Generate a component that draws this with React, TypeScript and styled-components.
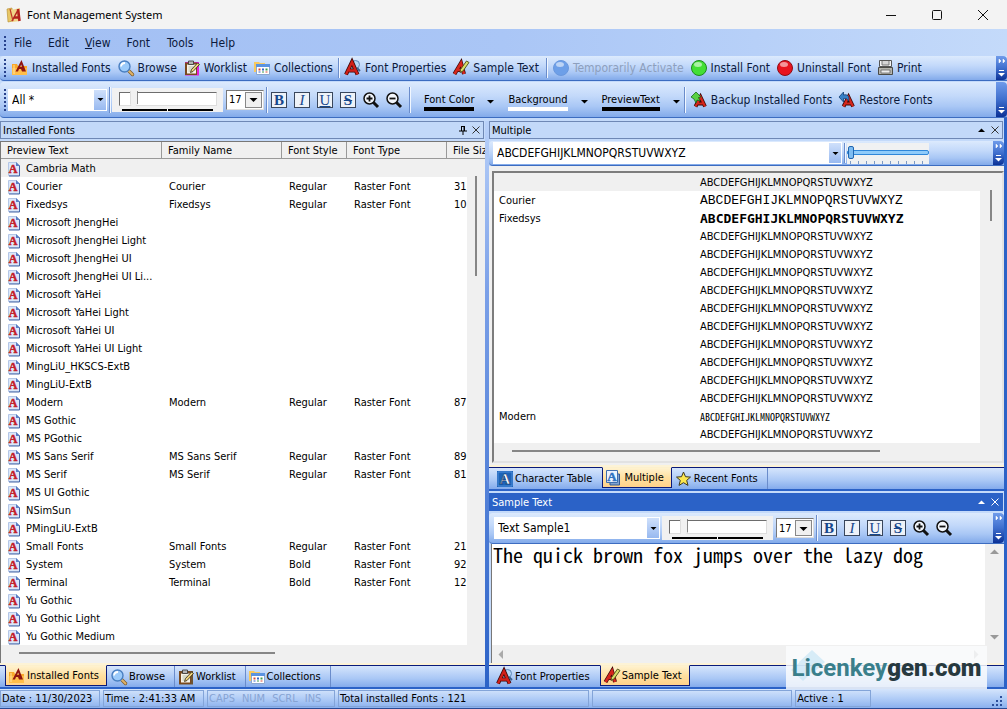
import React, { useState } from 'react';
import styled, { createGlobalStyle, css } from 'styled-components';

const ui = '"DejaVu Sans Condensed", "DejaVu Sans", sans-serif';
const bar = 'linear-gradient(#dceafd 0%, #c3d9fa 40%, #a9c7f5 70%, #82aaea 100%)';
const navy = '#0a1a7a';

const Global = createGlobalStyle`
  * { box-sizing: border-box; }
  body { margin: 0; background: #c4dafa; font-family: ${ui}; font-size: 11px; color: #000; }
  button, select, input, textarea { font: inherit; color: inherit; margin: 0; }
  button { background: none; border: 0; padding: 0; white-space: nowrap; }
  svg { display: block; flex: none; overflow: visible; }
`;

const Window = styled.div`
  position: relative;
  display: flex;
  flex-direction: column;
  min-height: 100vh;
  border-bottom: 2px solid #2a4a94;
`;
const TitleBar = styled.header`
  display: flex;
  align-items: center;
  height: 29px;
  padding-left: 6px;
  gap: 5px;
  background: #f3f3f3;
`;
const AppName = styled.h1`
  flex: 1;
  margin: 0;
  font: 400 11px/16px 'Noto Sans', sans-serif;
`;
const WinButtons = styled.div`
  display: flex;
  padding-right: 1px;
`;
const WinButton = styled.button`
  display: grid;
  place-items: center;
  width: 46px;
  height: 28px;
`;
const Menu = styled.nav`
  display: flex;
  align-items: center;
  gap: 1px;
  height: 27px;
  padding-left: 4px;
  font-size: 12px;
  color: #0c1a3c;
  background: linear-gradient(90deg, #a2bff3, #aac6f6 50%, #c4dafa);
`;
const MenuItem = styled.button`
  padding: 0 8px 0 7px;
  &:nth-of-type(n + 4) { padding-right: 9px; }
`;
const Grip = styled.span<{ $h?: number }>`
  width: 2px;
  height: ${(p) => p.$h || 14}px;
  background: repeating-linear-gradient(#27418c 0 2px, transparent 2px 4px);
`;
const ToolStrip = styled.div<{ $tall?: boolean }>`
  display: flex;
  align-items: center;
  height: ${(p) => (p.$tall ? 36 : 25)}px;
  margin-top: ${(p) => (p.$tall ? 1 : 0)}px;
  padding-left: 4px;
  font-size: 12px;
  border-bottom: 1px solid #3c6cc0;
  border-radius: 4px 0 0 4px;
  background: ${bar};
`;
const ToolButton = styled.button`
  display: flex;
  align-items: center;
  gap: 4px;
  height: 22px;
  padding: 0 3px 0 4px;
  color: #0c1a3c;
  &:disabled { color: #8d9fbd; }
`;
const Sep = styled.span<{ $h?: number }>`
  flex: none;
  width: 2px;
  height: ${(p) => p.$h || 20}px;
  margin: 0 1px 0 2px;
  border-left: 1px solid #6a8ccb;
  border-right: 1px solid #f1f7ff;
`;
const Overflow = styled.button`
  display: flex;
  flex-direction: column;
  align-items: center;
  justify-content: space-between;
  align-self: stretch;
  width: 11px;
  margin-left: auto;
  padding: 3px 0;
  border-radius: 0 4px 4px 0;
  background: linear-gradient(#6f9bea, #3f6fce 50%, #0b3196);
`;
const Edge = styled.span`
  width: 2px;
`;
const Combo = styled.span<{ $w?: number; $raised?: boolean }>`
  display: grid;
  grid-template-columns: minmax(0, 1fr) ${(p) => (p.$raised ? 17 : 12)}px;
  flex: ${(p) => (p.$w ? `0 0 ${p.$w}px` : '1 1 0')};
  height: ${(p) => (p.$raised ? 20 : 22)}px;
  background: #fff;
  border: 1px solid #fff;
  ${(p) =>
    p.$raised &&
    css`
      border-color: #777 #ddd #ddd #777;
      padding: 1px;
    `}
  select {
    grid-area: 1 / 1 / 2 / 3;
    width: 100%;
    min-width: 0;
    height: 100%;
    padding: 0 ${(p) => (p.$raised ? 1 : 3)}px;
    border: 0;
    border-radius: 0;
    background: transparent;
    appearance: none;
    font-size: ${(p) => (p.$raised ? 11 : 12)}px;
  }
`;
const Drop = styled.span<{ $raised?: boolean }>`
  grid-area: 1 / 2;
  display: grid;
  place-items: center;
  pointer-events: none;
  background: ${(p) => (p.$raised ? '#f0f0f0' : 'linear-gradient(#cfe0fb, #98b9f0)')};
  border: ${(p) => (p.$raised ? '1px solid #888' : '0')};
`;
const SliderBox = styled.label`
  display: flex;
  flex-direction: column;
  width: 111px;
  height: 24px;
  padding: 2px 7px 0;
  margin-right: 3px;
  background: #f1f1f1;
`;
const Slider = styled.input`
  width: 98px;
  height: 18px;
  background: transparent;
  appearance: none;
  &::-webkit-slider-runnable-track {
    height: 14px;
    border: 1px solid;
    border-color: #6d6d6d #ddd #ddd #6d6d6d;
    background: #fff;
  }
  &::-webkit-slider-thumb {
    appearance: none;
    width: 8px;
    height: 18px;
    margin-top: -2px;
    border-left: 1px solid #ddd;
    border-right: 1px solid #555;
    background: #f1f1f1;
    clip-path: polygon(0 0, 100% 0, 100% 72%, 50% 100%, 0 72%);
  }
`;
const TickLine = styled.span`
  height: 2px;
  margin: 1px 3px 0;
  background: linear-gradient(90deg, #000 0 49%, #fff 49% 51%, #000 51%);
`;
const SizeSliderBox = styled.label`
  width: 82px;
  height: 21px;
  padding: 3px 0 0;
  background: repeating-linear-gradient(90deg, transparent 0 3px, #7d9ac4 3px 4px, transparent 4px 8px) 0 18px / 100% 3px no-repeat #f0f1f2;
`;
const SizeSlider = styled.input`
  display: block;
  width: 82px;
  height: 14px;
  background: transparent;
  appearance: none;
  &::-webkit-slider-runnable-track {
    height: 5px;
    border: 1px solid #2f86d8;
    border-radius: 2px;
    background: #8fcbfa;
  }
  &::-webkit-slider-thumb {
    appearance: none;
    width: 6px;
    height: 13px;
    margin-top: -5px;
    border: 1px solid #2065b0;
    border-radius: 2px;
    background: #7dbcf2;
  }
`;
const FormatGroup = styled.div`
  display: flex;
  align-items: center;
  gap: 7px;
  padding: 0 5px 0 2px;
`;
const FormatButton = styled.button<{ $look: 'B' | 'I' | 'U' | 'S' }>`
  display: grid;
  place-items: center;
  width: 16px;
  height: 16px;
  border: 1px solid #39465c;
  background: #eef2f8;
  color: #17478c;
  font: 15px/14px 'Liberation Serif', serif;
  font-weight: ${(p) => (p.$look === 'B' || p.$look === 'S' ? 700 : 400)};
  font-style: ${(p) => (p.$look === 'I' ? 'italic' : 'normal')};
  text-decoration: ${(p) => (p.$look === 'U' ? 'underline' : p.$look === 'S' ? 'line-through' : 'none')};
`;
const ZoomButton = styled.button`
  width: 16px;
  height: 17px;
`;
const ColorPick = styled.button<{ $bar: string }>`
  display: flex;
  align-items: center;
  gap: 12px;
  padding: 3px 1px 0 12px;
  font-size: 11px;
  span {
    padding: 1px 0 0;
    border-bottom: 4px solid ${(p) => p.$bar};
    line-height: 14px;
  }
`;
const Workspace = styled.main`
  flex: 1;
  display: grid;
  grid-template-columns: minmax(0, 485fr) 4px minmax(0, 515fr);
  padding-top: 3px;
  border-right: 3px solid #2b62c7;
`;
const Splitter = styled.div`
  background: linear-gradient(#b9d1f9, #7ba0e8 30%, #2b62c7);
`;
const Column = styled.div`
  display: flex;
  flex-direction: column;
  min-width: 0;
`;
const Pane = styled.section<{ $grow?: boolean }>`
  display: flex;
  flex-direction: column;
  flex: ${(p) => (p.$grow ? 1 : 'none')};
  min-height: 0;
`;
const PaneTitle = styled.div<{ $active?: boolean }>`
  display: flex;
  align-items: center;
  gap: 5px;
  height: 18px;
  padding: 0 3px 0 2px;
  margin-right: 1px;
  margin-top: ${(p) => (p.$active ? 2 : 0)}px;
  border: 1px solid ${(p) => (p.$active ? '#2b62c7' : '#6f88b5')};
  background: ${(p) => (p.$active ? '#2b62c7' : '#c3d9f9')};
  color: ${(p) => (p.$active ? '#fff' : '#000')};
`;
const PaneName = styled.h2`
  flex: 1;
  margin: 0;
  font-size: 11px;
  font-weight: 400;
`;
const ListFrame = styled.div`
  position: relative;
  flex: 1;
  margin-top: 2px;
  padding-bottom: 18px;
  border-top: 1px solid #777;
  border-left: 1px solid #777;
  background: #f0f0f0;
`;
const FontTable = styled.table`
  width: 100%;
  table-layout: fixed;
  border-collapse: separate;
  border-spacing: 0;
  background: #fff;
  th, td {
    overflow: hidden;
    white-space: nowrap;
    text-align: left;
    font-weight: 400;
    line-height: 14px;
  }
  th {
    height: 17px;
    padding: 1px 0 0 6px;
    border-right: 1px solid #999;
    border-bottom: 1px solid #999;
    background: #f0f0f0;
  }
  th:last-child { border-right: 0; }
  td {
    height: 18px;
    padding: 1px 0 0 7px;
  }
  tbody tr:first-child td { background: #f0f0f0; }
`;
const NameCell = styled.span`
  display: flex;
  align-items: center;
  gap: 5px;
`;
const Col = styled.col<{ $w?: number }>`
  width: ${(p) => (p.$w ? p.$w + 'px' : 'auto')};
`;
const VScroll = styled.div<{ $top: number; $w: number; $bottom?: number }>`
  position: absolute;
  top: ${(p) => p.$top}px;
  right: 0;
  bottom: ${(p) => p.$bottom || 0}px;
  width: ${(p) => p.$w}px;
  display: flex;
  flex-direction: column;
  align-items: center;
  justify-content: space-between;
  background: #f0f0f0;
`;
const VThumb = styled.span<{ $h: number }>`
  width: 2px;
  height: ${(p) => p.$h}px;
  margin-top: 17px;
  background: #868686;
`;
const HScroll = styled.div`
  position: absolute;
  left: 0;
  right: 0;
  bottom: 0;
  height: 18px;
  padding: 7px 0 0 18px;
  background: #f0f0f0;
`;
const HThumb = styled.span<{ $w: number }>`
  display: block;
  width: ${(p) => p.$w}%;
  height: 2px;
  background: #868686;
`;
const Tabs = styled.div`
  display: flex;
  height: 24px;
  margin-top: 2px;
  padding: 0 0 1px 5px;
  border-top: 1px solid ${navy};
  border-bottom: 2px solid #2b62c7;
  background: linear-gradient(#d5e5fc, #a9c7f5 60%, #84abec);
  box-shadow: 0 -2px 0 #fdf3d6;
`;
const Tab = styled.button<{ $on?: boolean; $rule?: boolean }>`
  display: flex;
  align-items: center;
  align-self: flex-start;
  gap: 2px;
  height: 21px;
  padding: 0 9px 0 3px;
  border-right: 1px solid ${(p) => (p.$rule ? '#6a8ccb' : 'transparent')};
  ${(p) =>
    p.$on &&
    css`
      padding: 0 7px 0 3px;
      margin-right: 1px;
      margin-top: -1px;
      border: 1px solid ${navy};
      border-top-color: #fdf0cc;
      background: linear-gradient(#fff2cf, #ffe0a0 50%, #ffd28a);
    `}
`;
const InnerStrip = styled.div<{ $tall?: boolean }>`
  display: flex;
  align-items: center;
  height: ${(p) => (p.$tall ? 31 : 25)}px;
  margin-top: 2px;
  padding-left: ${(p) => (p.$tall ? 5 : 4)}px;
  border-bottom: 1px solid #3c6cc0;
  border-radius: 4px 0 0 4px;
  background: ${bar};
`;
const PreviewWrap = styled.div`
  padding: 5px 0 2px 3px;
  background: #f0f0f0;
`;
const PreviewFrame = styled.div`
  position: relative;
  padding: 0 22px 18px 0;
  border: 2px solid #7d7d7d;
  border-right-color: #e2e2e2;
  border-bottom-color: #e2e2e2;
  background: #f0f0f0;
`;
const PreviewTable = styled.table`
  width: 100%;
  table-layout: fixed;
  border-collapse: collapse;
  background: #fff;
  td {
    height: 18px;
    padding: 2px 0 0 5px;
    line-height: 14px;
    white-space: nowrap;
    overflow: hidden;
  }
  tr:first-child td { background: #f0f0f0; }
`;
const faces = {
  plain: css`letter-spacing: normal;`,
  courier: css`font: 13px/14px 'Liberation Mono', monospace;`,
  fixed: css`font: 700 13px/14px 'DejaVu Sans Mono', monospace;`,
  modern: css`font: 10px/14px 'Noto Sans Mono CJK SC', monospace;`,
};
const Specimen = styled.span<{ $face: keyof typeof faces }>`
  ${(p) => faces[p.$face]}
`;
const SampleFrame = styled.div`
  position: relative;
  flex: 1;
  display: flex;
  min-height: 114px;
  margin-left: 2px;
  padding: 0 19px 18px 0;
  border-left: 1px solid #777;
  background: #f0f0f0;
`;
const SampleBox = styled.textarea`
  flex: 1;
  padding: 0 1px;
  border: 0;
  outline: 0;
  resize: none;
  overflow: hidden;
  white-space: nowrap;
  background: #fff;
  font: 20px/22px 'Noto Sans Mono CJK SC', 'DejaVu Sans Mono', monospace;
`;
const HArrows = styled.div`
  position: absolute;
  left: 0;
  right: 19px;
  bottom: 0;
  height: 18px;
  display: flex;
  align-items: center;
  justify-content: space-between;
  padding: 0 5px;
`;
const Status = styled.footer`
  display: grid;
  grid-template-columns: 100px 101px 128px 251fr 201fr 76px 133fr;
  gap: 3px;
  height: 19px;
  padding: 1px 0;
  background: linear-gradient(#d5e5fc, #a9c7f5 60%, #8ab0ee);
`;
const StatusCell = styled.div<{ $dim?: boolean }>`
  display: flex;
  align-items: center;
  gap: 7px;
  padding-left: 1px;
  border: 1px solid #83a4d8;
  white-space: nowrap;
  overflow: hidden;
  color: ${(p) => (p.$dim ? '#86a3d3' : '#000')};
`;
const SizeGrip = styled.div`
  display: flex;
  justify-content: flex-end;
  align-items: flex-end;
  padding-right: 4px;
`;
const Watermark = styled.div`
  position: absolute;
  right: 20px;
  bottom: 19px;
  display: grid;
  place-items: center;
  width: 201px;
  height: 43px;
  background: rgba(250, 251, 253, 0.84);
  svg, p { grid-area: 1 / 1; }
  svg { justify-self: start; }
  p {
    margin: 0;
    font: 700 24px/40px Roboto, sans-serif;
    color: #3a7f8b;
  }
  b { color: #27393f; }
`;

/* ---------- icons ---------- */

const Letter = ({ x, y, s, c, o = '#4a0d0d' }: { x: number; y: number; s: number; c: string; o?: string }) => (
  <text x={x} y={y} fontSize={s} fontWeight="700" fontFamily="Liberation Serif, serif" fill={c} stroke={o} strokeWidth="0.5" textAnchor="middle">A</text>
);
const Svg = ({ children, w = 16, h = 16 }: { children: React.ReactNode; w?: number; h?: number }) => (
  <svg width={w} height={h} viewBox={`0 0 ${w} ${h}`} aria-hidden="true">{children}</svg>
);
const AppIcon = () => (
  <Svg>
    <path d="M1 2l5-1 1 13-5 1z" fill="#e8c766" stroke="#b38b2c" strokeWidth=".6" />
    <path d="M5 3l9-2v13l-8 1z" fill="#f0d488" />
    <path d="M6 14l6-11" stroke="#b3201d" strokeWidth="1.500" />
    <path d="M12 2l1.500 12M8 10.500h5" stroke="#b3201d" strokeWidth="2.600" fill="none" />
    <path d="M4 2l3 12" stroke="#c03a2a" strokeWidth="1.200" />
  </Svg>
);
const FolderIcon = () => (
  <Svg>
    <path d="M0 4h5l1 2h9v9H0z" fill="#f9a92c" />
    <path d="M0 8h15v7H0z" fill="#ffbe4a" />
    <path d="M2 5v9" stroke="#fde3a1" />
    <path d="M3.500 11.500L9.500 0l4.500 11.500h-4l-1-2.500H7l-1 2.500zM8 7h2L9.200 4.500z" fill="#8f1510" fillRule="evenodd" />
  </Svg>
);
const BrowseIcon = () => (
  <Svg>
    <path d="M10.500 10.500l4 4" stroke="#7c5a2a" strokeWidth="3.400" strokeLinecap="round" />
    <path d="M10.500 10.500l4 4" stroke="#e0b368" strokeWidth="2" strokeLinecap="round" />
    <circle cx="6.500" cy="6.500" r="5.500" fill="#9ccbfa" stroke="#4a7fc0" strokeWidth="1.400" />
    <path d="M3 6.500A4 4 0 017 3" stroke="#fff" strokeWidth="1.800" fill="none" />
  </Svg>
);
const WorkIcon = ({ tint = '#6e5331' }: { tint?: string }) => (
  <Svg>
    <path d="M1 2h14v13.500H1z" fill={tint} />
    <path d="M1 2.500h12v12.500H1z" fill="#7a4a1e" />
    <path d="M3 4.500h9v9H3z" fill="#f7f3e8" />
    <path d="M4.500 1h5v3.500h-5z" fill="#b5b5b5" stroke="#333" strokeWidth=".8" />
    <path d="M4.500 7h5M4.500 9h4M4.500 11h3" stroke="#b9c0a9" />
    <path d="M6.500 12.500l1-3L13.500 3l2 1.500-6.500 7z" fill="#efd27a" stroke="#2c2410" strokeWidth=".8" />
  </Svg>
);
const CollIcon = () => (
  <Svg>
    <path d="M0 2h5l1 1h5v9H0z" fill="#f8c95f" />
    <path d="M2.500 4.500h13v10h-13z" fill="#fff" stroke="#8ba6cf" />
    <path d="M2 4h14v3H2z" fill="#5b93e0" />
    <path d="M4.500 8.500h2v2h-2zM11.500 11.500h2v1h-2z" fill="#d94b3a" />
    <path d="M8 8.500h2v2H8zM4.500 11.500h2v1h-2z" fill="#3565c8" />
    <path d="M11.500 8.500h2v2h-2zM8 11.500h2v1H8z" fill="#3f9b52" />
  </Svg>
);
const PropsIcon = () => (
  <Svg>
    <circle cx="10.500" cy="4.500" r="4" fill="#b5d6f6" stroke="#5c87b8" />
    <path d="M1 14.500L7 2l5.500 12.500M4 10.500h6" stroke="#3a0808" strokeWidth="4" fill="none" />
    <path d="M1 14.500L7 2l5.500 12.500M4 10.500h6" stroke="#d21f19" strokeWidth="2.400" fill="none" />
    <path d="M12 8l3 3" stroke="#3b5f8c" strokeWidth="1.800" />
  </Svg>
);
const SampleIcon = () => (
  <Svg>
    <path d="M1.500 14L8 3l3 11M4 10h6" stroke="#3a0808" strokeWidth="4" fill="none" />
    <path d="M1.500 14L8 3l3 11M4 10h6" stroke="#d5261c" strokeWidth="2.600" fill="none" />
    <path d="M7.500 9.500L13.500 1 16 2.500l-6 8.500-3 1.500z" fill="#d8df6a" stroke="#4b4b14" strokeWidth=".9" />
  </Svg>
);
const BallIcon = ({ c, rim }: { c: string; rim: string }) => (
  <Svg>
    <circle cx="8" cy="8" r="7.500" fill={c} stroke={rim} />
    <ellipse cx="7" cy="4.500" rx="4" ry="2.500" fill="#fff" opacity=".55" />
  </Svg>
);
const PrintIcon = () => (
  <Svg w={15}>
    <path d="M1.500 .5h12v6h-12z" fill="#f4f4f4" stroke="#555" />
    <path d="M4 1v4h7V1" fill="#d5d5d5" stroke="#777" />
    <path d="M.5 7.500h14v7H.5z" fill="#b4b4ae" stroke="#4b4b46" />
    <path d="M3 10h9v3H3z" fill="#eee" stroke="#666" strokeWidth=".8" />
  </Svg>
);
const RedA = () => (
  <>
    <path d="M4.500 14.500L9.500 5l4.500 9.500M7 11.500h5" stroke="#3a0808" strokeWidth="3.800" fill="none" />
    <path d="M4.500 14.500L9.500 5l4.500 9.500M7 11.500h5" stroke="#d5261c" strokeWidth="2.200" fill="none" />
  </>
);
const BackupIcon = () => (
  <Svg>
    <RedA />
    <path d="M0 5l5-5 5 5-2.500.5L9 9 6 8l-1 3-2-4z" fill="#59d043" stroke="#156b1b" strokeWidth=".8" />
  </Svg>
);
const RestoreIcon = () => (
  <Svg>
    <RedA />
    <path d="M0 5l4.500-5v3c4-1 6.500 1.500 5 6-1-2-2.500-3-5-2.500V10z" fill="#3680c8" stroke="#123f75" strokeWidth=".8" />
  </Svg>
);
const DocIcon = () => (
  <Svg w={13} h={16}>
    <path d="M.5 1.500h8l3 3v10H.5z" fill="#dbe7f9" stroke="#b4c7e6" />
    <path d="M11.500 4.500v10.500H1" stroke="#4767a8" fill="none" />
    <path d="M8 1l4 4H8z" fill="#5c7fc4" />
    <Letter x={5} y={12} s={12} c="#c4202a" o="#c4202a" />
  </Svg>
);
const CharIcon = () => (
  <Svg>
    <path d="M0 0h16v16H0z" fill="#1c63b8" />
    <path d="M1 1h14v14H1z" fill="none" stroke="#4c8dda" />
    <Letter x={8} y={13} s={15} c="#fff" o="#0b2c5c" />
  </Svg>
);
const MultiIcon = () => (
  <Svg>
    <path d="M4 4h9.500v11H4z" fill="#7fa3d0" stroke="#345b94" />
    <path d="M.5 .5h11v12H.5z" fill="#eaf3fe" stroke="#3f6fae" />
    <Letter x={6} y={11} s={13} c="#2f74c0" o="#2f74c0" />
  </Svg>
);
const StarIcon = () => (
  <Svg>
    <path d="M7.500 1l2 4.700 5 .4-3.800 3.300 1.300 5L7.500 11.700 3 14.400l1.300-5L.5 6.100l5-.4z" fill="#fbe650" stroke="#3d3820" />
  </Svg>
);
const ZoomIcon = ({ plus }: { plus?: boolean }) => (
  <Svg>
    <circle cx="6.500" cy="6.500" r="5.500" fill="#f3f7fd" stroke="#111" strokeWidth="1.500" />
    <path d={plus ? 'M3.500 6.500h6M6.500 3.500v6' : 'M3.500 6.500h6'} stroke="#111" strokeWidth="1.800" />
    <path d="M10.500 10.500l4.500 4.500" stroke="#111" strokeWidth="3" />
  </Svg>
);
const Arrow = ({ w = 5, c = '#000', d = 'down' }: { w?: number; c?: string; d?: 'down' | 'up' | 'left' | 'right' }) => {
  const r = { down: 0, left: 90, up: 180, right: 270 }[d];
  return (
    <svg width="9" height="9" viewBox="0 0 9 9" aria-hidden="true">
      <path d={`M${4.5 - w / 2} 3h${w}L4.500 ${3 + w / 2}z`} fill={c} transform={`rotate(${r} 4.500 4.500)`} />
    </svg>
  );
};
const Cross = ({ c = '#333' }: { c?: string }) => (
  <Svg w={8} h={8}><path d="M.5 .5l7 7M7.500 .5l-7 7" stroke={c} /></Svg>
);
const Pin = () => (
  <Svg w={8} h={10}><path d="M2.500 1v5M2 1.500h4M5 1v5" stroke="#000" fill="none" /><path d="M5 1h1v5H5zM0 5.500h8v1H0zM3.500 6h1v4h-1z" /></Svg>
);

/* ---------- shared parts ---------- */

const More = ({ chevrons = true }: { chevrons?: boolean }) => (
  <Overflow aria-label="Toolbar options">
    {chevrons ? <Svg w={8} h={5}><path d="M1 0l2 2-2 2zM5 0l2 2-2 2z" fill="#fff" stroke="#fff" strokeWidth=".5" /></Svg> : <span />}
    <Svg w={7} h={7}><path d="M1 .5h5" stroke="#fff" /><path d="M0 3h7L3.500 6.500z" fill="#fff" /></Svg>
  </Overflow>
);

const Choice = ({ label, options, width, raised }: { label: string; options: string[]; width?: number; raised?: boolean }) => (
  <Combo $w={width} $raised={raised}>
    <select aria-label={label} defaultValue={options[0]}>
      {options.map((o) => <option key={o}>{o}</option>)}
    </select>
    <Drop $raised={raised}><Arrow w={raised ? 8 : 6} /></Drop>
  </Combo>
);

const SizeControls = () => (
  <>
    <SliderBox>
      <Slider type="range" aria-label="Font size" defaultValue={11} />
      <TickLine />
    </SliderBox>
    <Choice label="Point size" options={['17']} width={38} raised />
    <Sep $h={26} />
    <FormatGroup>
      <FormatButton $look="B" title="Bold">B</FormatButton>
      <FormatButton $look="I" title="Italic">I</FormatButton>
      <FormatButton $look="U" title="Underline">U</FormatButton>
      <FormatButton $look="S" title="Strikeout">S</FormatButton>
      <ZoomButton aria-label="Zoom in"><ZoomIcon plus /></ZoomButton>
      <ZoomButton aria-label="Zoom out"><ZoomIcon /></ZoomButton>
    </FormatGroup>
  </>
);

/* ---------- data ---------- */

type FontRow = [name: string, style?: string, size?: string];
const installed: FontRow[] = [
  ['Cambria Math'], ['Courier', 'Regular', '31'], ['Fixedsys', 'Regular', '10'],
  ['Microsoft JhengHei'], ['Microsoft JhengHei Light'], ['Microsoft JhengHei UI'], ['Microsoft JhengHei UI Li...'],
  ['Microsoft YaHei'], ['Microsoft YaHei Light'], ['Microsoft YaHei UI'], ['Microsoft YaHei UI Light'],
  ['MingLiU_HKSCS-ExtB'], ['MingLiU-ExtB'], ['Modern', 'Regular', '87'], ['MS Gothic'], ['MS PGothic'],
  ['MS Sans Serif', 'Regular', '89'], ['MS Serif', 'Regular', '81'], ['MS UI Gothic'], ['NSimSun'], ['PMingLiU-ExtB'],
  ['Small Fonts', 'Regular', '21'], ['System', 'Bold', '92'], ['Terminal', 'Bold', '12'],
  ['Yu Gothic'], ['Yu Gothic Light'], ['Yu Gothic Medium'],
];
const alphabet = 'ABCDEFGHIJKLMNOPQRSTUVWXYZ';
const previews: { name: string; face: keyof typeof faces }[] = Array.from({ length: 15 }, (_, i) => {
  if (i === 1) return { name: 'Courier', face: 'courier' };
  if (i === 2) return { name: 'Fixedsys', face: 'fixed' };
  if (i === 13) return { name: 'Modern', face: 'modern' };
  return { name: '', face: 'plain' };
});

export default function App() {
  const [sample, setSample] = useState('The quick brown fox jumps over the lazy dog');
  return (
    <Window>
      <Global />
      <TitleBar>
        <AppIcon />
        <AppName>Font Management System</AppName>
        <WinButtons>
          <WinButton aria-label="Minimize"><Svg w={10} h={10}><path d="M0 5.500h10" stroke="#111" /></Svg></WinButton>
          <WinButton aria-label="Maximize"><Svg w={10} h={10}><rect x=".5" y=".5" width="9" height="9" rx="1" fill="none" stroke="#111" /></Svg></WinButton>
          <WinButton aria-label="Close"><Svg w={10} h={10}><path d="M0 0l10 10M10 0L0 10" stroke="#111" /></Svg></WinButton>
        </WinButtons>
      </TitleBar>
      <Menu>
        <Grip />
        <MenuItem>File</MenuItem>
        <MenuItem>Edit</MenuItem>
        <MenuItem><u>V</u>iew</MenuItem>
        <MenuItem>Font</MenuItem>
        <MenuItem>Tools</MenuItem>
        <MenuItem>Help</MenuItem>
      </Menu>
      <ToolStrip>
        <Grip $h={18} />
        <Edge />
        <ToolButton><FolderIcon />Installed Fonts</ToolButton>
        <ToolButton><BrowseIcon />Browse</ToolButton>
        <ToolButton><WorkIcon tint="#e21fd8" />Worklist</ToolButton>
        <ToolButton><CollIcon />Collections</ToolButton>
        <Sep />
        <ToolButton><PropsIcon />Font Properties</ToolButton>
        <ToolButton><SampleIcon />Sample Text</ToolButton>
        <Edge />
        <Sep />
        <ToolButton disabled><BallIcon c="#6d9fe8" rim="#6a98de" />Temporarily Activate</ToolButton>
        <ToolButton><BallIcon c="#43df35" rim="#1c8a1c" />Install Font</ToolButton>
        <ToolButton><BallIcon c="#e8131e" rim="#8d0c14" />Uninstall Font</ToolButton>
        <ToolButton><PrintIcon />Print</ToolButton>
        <More />
      </ToolStrip>
      <ToolStrip $tall>
        <Grip $h={22} />
        <Edge />
        <Choice label="Filter" options={['All *']} width={99} />
        <Sep $h={26} />
        <SizeControls />
        <Sep $h={26} />
        <ColorPick $bar="#000"><span>Font Color</span><Arrow w={7} /></ColorPick>
        <ColorPick $bar="#fff"><span>Background</span><Arrow w={7} /></ColorPick>
        <ColorPick $bar="#000"><span>PreviewText</span><Arrow w={7} /></ColorPick>
        <Sep $h={26} />
        <ToolButton><BackupIcon />Backup Installed Fonts</ToolButton>
        <ToolButton><RestoreIcon />Restore Fonts</ToolButton>
        <More chevrons={false} />
      </ToolStrip>

      <Workspace>
        <Column>
          <Pane $grow>
            <PaneTitle>
              <PaneName>Installed Fonts</PaneName>
              <button aria-label="Pin"><Pin /></button>
              <button aria-label="Close pane"><Cross /></button>
            </PaneTitle>
            <ListFrame>
              <FontTable>
                <colgroup><Col $w={161} /><Col $w={120} /><Col $w={65} /><Col $w={100} /><Col /></colgroup>
                <thead>
                  <tr><th>Preview Text</th><th>Family Name</th><th>Font Style</th><th>Font Type</th><th>File Size</th></tr>
                </thead>
                <tbody>
                  {installed.map(([name, style, size]) => (
                    <tr key={name}>
                      <td><NameCell><DocIcon />{name}</NameCell></td>
                      <td>{style && name}</td>
                      <td>{style}</td>
                      <td>{style && 'Raster Font'}</td>
                      <td>{size}</td>
                    </tr>
                  ))}
                </tbody>
              </FontTable>
              <VScroll $top={17} $w={18}><VThumb $h={100} /></VScroll>
              <HScroll><HThumb $w={55} /></HScroll>
            </ListFrame>
            <Tabs>
              <Tab $on><FolderIcon />Installed Fonts</Tab>
              <Tab $rule><BrowseIcon />Browse</Tab>
              <Tab $rule><WorkIcon />Worklist</Tab>
              <Tab $rule><CollIcon />Collections</Tab>
            </Tabs>
          </Pane>
        </Column>
        <Splitter />
        <Column>
          <Pane>
            <PaneTitle>
              <PaneName>Multiple</PaneName>
              <button aria-label="Collapse pane"><Arrow w={7} d="up" /></button>
              <button aria-label="Close pane"><Cross /></button>
            </PaneTitle>
            <InnerStrip>
              <Choice label="Preview string" options={[alphabet]} width={349} />
              <Sep />
              <SizeSliderBox><SizeSlider type="range" aria-label="Preview size" defaultValue={0} /></SizeSliderBox>
              <More />
            </InnerStrip>
            <PreviewWrap>
              <PreviewFrame>
                <PreviewTable>
                  <colgroup><Col $w={201} /><Col /></colgroup>
                  <tbody>
                    {previews.map((p, i) => (
                      <tr key={i}>
                        <td>{p.name}</td>
                        <td><Specimen $face={p.face}>{alphabet}</Specimen></td>
                      </tr>
                    ))}
                  </tbody>
                </PreviewTable>
                <VScroll $top={0} $w={22}><VThumb $h={31} /></VScroll>
                <HScroll><HThumb $w={75} /></HScroll>
              </PreviewFrame>
            </PreviewWrap>
            <Tabs>
              <Tab><CharIcon />Character Table</Tab>
              <Tab $on><MultiIcon />Multiple</Tab>
              <Tab $rule><StarIcon />Recent Fonts</Tab>
            </Tabs>
          </Pane>
          <Pane $grow>
            <PaneTitle $active>
              <PaneName>Sample Text</PaneName>
              <button aria-label="Collapse pane"><Arrow w={7} d="up" c="#fff" /></button>
              <button aria-label="Close pane"><Cross c="#fff" /></button>
            </PaneTitle>
            <InnerStrip $tall>
              <Choice label="Sample" options={['Text Sample1']} width={166} />
              <Edge />
              <SizeControls />
              <More />
            </InnerStrip>
            <SampleFrame>
              <SampleBox aria-label="Sample text" wrap="off" spellCheck={false} value={sample} onChange={(e) => setSample(e.target.value)} />
              <VScroll $top={4} $w={19} $bottom={22}><Arrow w={9} c="#999" d="up" /><Arrow w={9} c="#999" /></VScroll>
              <HArrows><Arrow w={9} c="#aaa" d="left" /><Arrow w={9} c="#aaa" d="right" /></HArrows>
            </SampleFrame>
            <Tabs>
              <Tab><PropsIcon />Font Properties</Tab>
              <Tab $on><SampleIcon />Sample Text</Tab>
            </Tabs>
          </Pane>
        </Column>
      </Workspace>

      <Status>
        <StatusCell>Date : 11/30/2023</StatusCell>
        <StatusCell>Time : 2:41:33 AM</StatusCell>
        <StatusCell $dim><span>CAPS</span><span>NUM</span><span>SCRL</span><span>INS</span></StatusCell>
        <StatusCell>Total installed Fonts : 121</StatusCell>
        <StatusCell />
        <StatusCell>Active : 1</StatusCell>
        <SizeGrip><Svg w={11} h={11}><path d="M8 0h2v2H8zM4 4h2v2H4zM8 4h2v2H8zM0 8h2v2H0zM4 8h2v2H4zM8 8h2v2H8z" fill="#2d4f9c" /></Svg></SizeGrip>
      </Status>
      <Watermark>
        <Svg w={60} h={43}><path d="M26 4l13 12-13 12-13-12zM14 16l11 11-8 8L5 24z" fill="#bfe2f5" opacity=".6" /></Svg>
        <p>Licenkey<b>gen.com</b></p>
      </Watermark>
    </Window>
  );
}
